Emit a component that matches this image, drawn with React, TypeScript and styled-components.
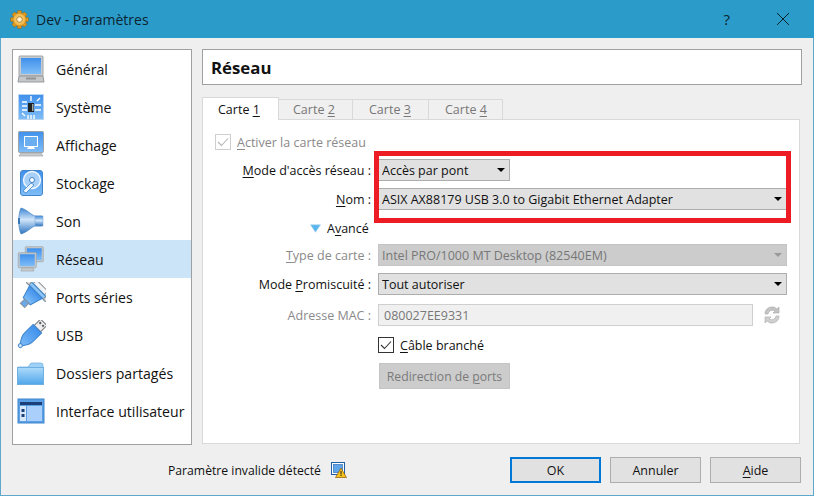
import React from 'react'
import styled, { createGlobalStyle } from 'styled-components'

const Global = createGlobalStyle`
  html, body {
    margin: 0;
    padding: 0;
    background: #fff;
  }
  body {
    font-family: "Open Sans", "Noto Sans", sans-serif;
    font-size: 13px;
    color: #111;
  }
  u { text-underline-offset: 2px; }
`

const Window = styled.div`
  position: relative;
  box-sizing: border-box;
  width: 814px;
  height: 496px;
  display: flex;
  flex-direction: column;
  background: #efefef;
  border: 1px solid #5fa9cf;
  border-top: 0;
`

const TitleBar = styled.div`
  flex: none;
  height: 38px;
  margin: 0 -1px;
  padding: 0 24px 0 10px;
  display: flex;
  align-items: center;
  background: #2b9bca;
  font-size: 14px;
  color: #0c2430;
`

const TitleText = styled.span`
  margin-left: 7px;
  flex: 1;
`

const TitleHelp = styled.span`
  margin-right: 46px;
  font-size: 15px;
`

const Body = styled.div`
  flex: 1;
  display: flex;
  gap: 10px;
  padding: 11px 11px 0 11px;
`

const Sidebar = styled.div`
  box-sizing: border-box;
  width: 180px;
  height: 396px;
  background: #fff;
  border: 1px solid #a0a0a0;
`

const SideItem = styled.div<{ $active?: boolean }>`
  height: 38px;
  display: flex;
  align-items: center;
  gap: 10px;
  padding-left: 3px;
  font-size: 14.1px;
  white-space: nowrap;
  background: ${(p) => (p.$active ? '#cce4f7' : 'transparent')};
`

const IconBox = styled.svg`
  flex: none;
  width: 30px;
  height: 30px;
`

const Defs = styled.svg`
  position: absolute;
  width: 0;
  height: 0;
`

const Main = styled.div`
  flex: 1;
  display: flex;
  flex-direction: column;
`

const Header = styled.div`
  box-sizing: border-box;
  height: 36px;
  padding: 1px 0 0 8px;
  display: flex;
  align-items: center;
  background: #fff;
  border: 1px solid #a0a0a0;
  font-size: 16.8px;
  font-weight: 700;
`

const Tabs = styled.div`
  display: flex;
  margin-top: 12px;
  height: 23px;
  position: relative;
  z-index: 1;
`

const Tab = styled.div<{ $active?: boolean; $width: number; $pad: number }>`
  box-sizing: border-box;
  width: ${(p) => p.$width}px;
  height: ${(p) => (p.$active ? '23px' : '21px')};
  margin-top: ${(p) => (p.$active ? '0' : '2px')};
  padding-left: ${(p) => p.$pad}px;
  display: flex;
  align-items: center;
  border: 1px solid #d9d9d9;
  border-left-width: ${(p) => (p.$active ? '1px' : '0')};
  border-bottom-width: ${(p) => (p.$active ? '0' : '1px')};
  background: ${(p) => (p.$active ? '#fff' : '#f0f0f0')};
  color: ${(p) => (p.$active ? '#111' : '#777')};
  font-size: 12.5px;
`

const Panel = styled.div`
  box-sizing: border-box;
  width: 598px;
  height: 325px;
  margin-top: -1px;
  padding: 13px 12px 0;
  display: flex;
  flex-direction: column;
  background: #fff;
  border: 1px solid #d9d9d9;
`

const Row = styled.div<{ $top?: number }>`
  display: grid;
  grid-template-columns: 156px 1fr;
  column-gap: 7px;
  align-items: center;
  margin-top: ${(p) => p.$top ?? 0}px;
`

const Label = styled.label<{ $muted?: boolean }>`
  text-align: right;
  white-space: nowrap;
  font-size: 12.5px;
  color: ${(p) => (p.$muted ? '#8a8a8a' : '#111')};
`

const CheckRow = styled.label<{ $muted?: boolean }>`
  height: 18px;
  display: flex;
  align-items: center;
  gap: 6px;
  font-size: 12.5px;
  color: ${(p) => (p.$muted ? '#8a8a8a' : '#111')};
`

const Check = styled.span<{ $muted?: boolean }>`
  box-sizing: border-box;
  width: 16px;
  height: 16px;
  display: flex;
  align-items: center;
  justify-content: center;
  background: #fff;
  border: 1px solid ${(p) => (p.$muted ? '#cfcfcf' : '#333')};
  color: ${(p) => (p.$muted ? '#b5b5b5' : '#333')};
`

const Combo = styled.div<{ $width?: number; $disabled?: boolean }>`
  box-sizing: border-box;
  width: ${(p) => (p.$width ? `${p.$width}px` : '100%')};
  height: 22px;
  padding: 0 4px 0 3px;
  display: flex;
  align-items: center;
  justify-content: space-between;
  font-size: 12.5px;
  white-space: nowrap;
  background: ${(p) => (p.$disabled ? '#cccccc' : '#e1e1e1')};
  border: 1px solid ${(p) => (p.$disabled ? '#c4c4c4' : '#adadad')};
  color: ${(p) => (p.$disabled ? '#777' : '#111')};
`

const Caret = styled.span<{ $disabled?: boolean }>`
  width: 0;
  height: 0;
  border-left: 4px solid transparent;
  border-right: 4px solid transparent;
  border-top: 4px solid ${(p) => (p.$disabled ? '#999' : '#000')};
`

const Advanced = styled.div`
  height: 18px;
  margin-left: 95px;
  display: flex;
  align-items: center;
  gap: 6px;
  font-size: 12.5px;
`

const MacRow = styled.div`
  display: flex;
  align-items: center;
  gap: 10px;
`

const MacInput = styled.div`
  box-sizing: border-box;
  width: 375px;
  height: 22px;
  padding-left: 5px;
  display: flex;
  align-items: center;
  background: #f0f0f0;
  border: 1px solid #cfcfcf;
  color: #777;
  font-size: 12.5px;
`

const PortsButton = styled.div`
  box-sizing: border-box;
  width: 131px;
  height: 26px;
  margin-left: 1px;
  display: flex;
  align-items: center;
  justify-content: center;
  background: #cccccc;
  border: 1px solid #c4c4c4;
  color: #7a7a7a;
  font-size: 12.2px;
`

const Footer = styled.div`
  flex: none;
  height: 50px;
  padding-left: 167px;
  padding-right: 12px;
  display: flex;
  align-items: center;
  font-size: 12.5px;
`

const Warning = styled.span`
  flex: 1;
  display: flex;
  align-items: center;
  gap: 10px;
  font-size: 12.2px;
`

const Button = styled.div<{ $primary?: boolean }>`
  box-sizing: border-box;
  width: 91px;
  height: 26px;
  margin-left: 9px;
  display: flex;
  align-items: center;
  justify-content: center;
  background: #e1e1e1;
  border: ${(p) => (p.$primary ? '2px solid #0078d7' : '1px solid #adadad')};
  font-size: 12.5px;
`

const Highlight = styled.div`
  position: absolute;
  left: 373px;
  top: 151px;
  width: 417px;
  height: 72px;
  box-sizing: border-box;
  border: 5px solid #ed1c24;
  pointer-events: none;
`

const GearIcon = () => (
  <svg width="19" height="19" viewBox="0 0 20 20">
    <g fill="#e09a1e" stroke="#8a5a10" strokeWidth="0.5">
      {[0, 45, 90, 135, 180, 225, 270, 315].map((a) => (
        <rect key={a} x="7.8" y="0.6" width="4.4" height="5" rx="1" transform={`rotate(${a} 10 10)`} />
      ))}
    </g>
    <circle cx="10" cy="10" r="7" fill="url(#gold)" stroke="#a86f14" strokeWidth="0.5" />
    <circle cx="10" cy="10" r="3" fill="#fff3d0" stroke="#9a6412" strokeWidth="0.8" />
  </svg>
)

const CloseIcon = () => (
  <svg width="14" height="14" viewBox="0 0 14 14">
    <path d="M1 1 L13 13 M13 1 L1 13" stroke="#0c2430" strokeWidth="1" fill="none" />
  </svg>
)

const Monitor = ({ x = 0, y = 0, s = 1 }: { x?: number; y?: number; s?: number }) => (
  <g transform={`translate(${x} ${y}) scale(${s})`}>
    <rect x="3" y="1" width="24" height="20" rx="1" fill="#c9ccce" stroke="#9ea3a6" />
    <rect x="5" y="3" width="20" height="16" fill="url(#blue)" />
  </g>
)

const GeneralIcon = () => (
  <IconBox viewBox="0 0 30 30">
    <Monitor y={1} />
    <path d="M3 22 H27 L28 28 H2 Z" fill="#c4c6c8" stroke="#96999c" />
    <rect x="10" y="23.5" width="10" height="2" fill="#8f9396" />
  </IconBox>
)

const SystemIcon = () => (
  <IconBox viewBox="0 0 30 30">
    <rect x="2.5" y="2.5" width="25" height="25" fill="url(#blue)" stroke="#b8d4ef" />
    <rect x="12" y="11" width="6" height="9" fill="#222" />
    <rect x="16" y="12" width="1.5" height="7" fill="#9aa" />
    <path
      d="M15 4 V9 M6 10 H11 M6 14 H11 M6 18 H11 M19 13 H25 M19 18 H25 M12 23 V27 M15 23 V27 M18 23 V27 M21 9 L24 6 M9 24 L6 21"
      stroke="#fff"
      strokeWidth="1.4"
      fill="none"
    />
  </IconBox>
)

const DisplayIcon = () => (
  <IconBox viewBox="0 0 30 30">
    <rect x="2.5" y="1.5" width="25" height="21" rx="1" fill="url(#blue)" stroke="#9ea3a6" />
    <rect x="8" y="6" width="14" height="11" fill="#fff" />
    <rect x="9" y="7" width="12" height="9" fill="#6aaef0" />
    <path d="M12 17 H18 L19 19 H11 Z" fill="#fff" />
    <path d="M5 23 H25 L27 26 H3 Z" fill="#c9ccce" stroke="#9ea3a6" strokeWidth="0.7" />
  </IconBox>
)

const StorageIcon = () => (
  <IconBox viewBox="0 0 30 30">
    <rect x="4.5" y="2.5" width="22" height="25" rx="2.5" fill="url(#blue)" stroke="#3f85cc" />
    <circle cx="16" cy="12" r="8.5" fill="#a9d0f7" stroke="#f2f8fe" strokeWidth="1.4" />
    <circle cx="16" cy="12" r="2.5" fill="#fff" stroke="#3f85cc" />
    <path d="M7 23 L15 15 L18 17 L10 25 Z" fill="#eef5fc" stroke="#3f85cc" strokeWidth="0.8" />
  </IconBox>
)

const SoundIcon = () => (
  <IconBox viewBox="0 0 30 30">
    <path d="M5 2 C12 4 15 9 19 10 H26 V20 H19 C15 21 12 26 5 28 C2 22 2 8 5 2 Z" fill="url(#cone)" stroke="#3f7fbf" strokeWidth="0.7" />
    <rect x="19" y="10" width="8" height="10" fill="url(#cone)" stroke="#7aa9d6" strokeWidth="0.5" />
    <rect x="2" y="12" width="2" height="6" fill="#3977b5" />
  </IconBox>
)

const NetworkIcon = () => (
  <IconBox viewBox="0 0 30 30">
    <Monitor x={7} y={2} s={0.75} />
    <Monitor x={0} y={8} s={0.75} />
    <path d="M6 24 H17 L18 27 H5 Z" fill="#c9ccce" stroke="#9ea3a6" strokeWidth="0.7" />
  </IconBox>
)

const SerialIcon = () => (
  <IconBox viewBox="0 0 30 30">
    <g transform="rotate(45 15 15)">
      <rect x="7" y="-1" width="16" height="5" fill="#f2f3f4" stroke="#8d9194" />
      <rect x="2" y="4" width="26" height="4" fill="#8cc4f5" stroke="#3f85cc" />
      <path d="M6 8 H24 L20 21 H10 Z" fill="url(#blue)" stroke="#3f85cc" />
      <rect x="12" y="21" width="6" height="6" fill="#6aa8e8" stroke="#8d9194" />
      <circle cx="3" cy="6" r="2" fill="#e3e6e8" stroke="#8d9194" />
      <circle cx="27" cy="6" r="2" fill="#e3e6e8" stroke="#8d9194" />
    </g>
  </IconBox>
)

const UsbIcon = () => (
  <IconBox viewBox="0 0 30 30">
    <g transform="rotate(45 15 15)">
      <rect x="10.5" y="-3" width="9" height="9" fill="#eceeef" stroke="#777" />
      <rect x="12" y="-1" width="2" height="2" fill="#555" />
      <rect x="16" y="-1" width="2" height="2" fill="#555" />
      <path d="M9 6 H21 V18 C21 24 18 26 15 31 C12 26 9 24 9 18 Z" fill="url(#blue)" stroke="#3f85cc" />
      <circle cx="15" cy="30" r="2" fill="#cfe3f7" stroke="#3f85cc" />
    </g>
  </IconBox>
)

const FolderIcon = () => (
  <IconBox viewBox="0 0 30 30">
    <path d="M2 9 L12 9 L15 5 H25 Q27 5 27 7 V10 H2 Z" fill="#9fd0f5" stroke="#6fb0e3" strokeWidth="0.7" />
    <rect x="1.5" y="9.5" width="26" height="17" fill="url(#folder)" stroke="#6fb0e3" />
  </IconBox>
)

const InterfaceIcon = () => (
  <IconBox viewBox="0 0 30 30">
    <rect x="2" y="3" width="26" height="24" fill="#5b9fe6" stroke="#3f85cc" />
    <rect x="4" y="6" width="22" height="3" fill="#1d3f78" />
    <rect x="4" y="10" width="6" height="15" fill="#d7e8fa" />
    <rect x="11" y="10" width="15" height="15" fill="#a9cffa" />
    <rect x="5.5" y="13" width="3" height="3" fill="#1d3f78" />
    <rect x="5.5" y="18" width="3" height="3" fill="#1d3f78" />
  </IconBox>
)

const RefreshIcon = () => (
  <svg width="18" height="20" viewBox="0 0 18 20">
    <path d="M2 9 A7 7 0 0 1 14 4 L16 2 V8 H10 L12 6 A4.5 4.5 0 0 0 5 9 Z" fill="#c4c4c4" stroke="#a8a8a8" strokeWidth="0.6" />
    <path d="M16 11 A7 7 0 0 1 4 16 L2 18 V12 H8 L6 14 A4.5 4.5 0 0 0 13 11 Z" fill="#d0d0d0" stroke="#a8a8a8" strokeWidth="0.6" />
  </svg>
)

const WarnIcon = () => (
  <svg width="16" height="16" viewBox="0 0 16 16">
    <rect x="0.5" y="0.5" width="13" height="12" fill="#fff" stroke="#1f5fa8" />
    <rect x="2.5" y="2.5" width="9" height="8" fill="#5fa5ea" stroke="#1f5fa8" strokeWidth="0.6" />
    <path d="M10 6 L15.5 15.5 H4.5 Z" fill="#f7c21a" stroke="#8a5a10" strokeWidth="0.7" />
    <rect x="9.5" y="9" width="1" height="3.5" fill="#222" />
    <rect x="9.5" y="13" width="1" height="1" fill="#222" />
  </svg>
)

const TickIcon = () => (
  <svg width="12" height="10" viewBox="0 0 12 10">
    <path d="M1 5 L4.5 8.5 L11 1.5" stroke="currentColor" strokeWidth="1.1" fill="none" />
  </svg>
)

const ExpandIcon = () => (
  <svg width="11" height="9" viewBox="0 0 12 9">
    <path d="M0.5 0.5 H11.5 L6 8.5 Z" fill="#58b4ec" stroke="#a8d4f0" strokeWidth="0.7" />
  </svg>
)

const sections = [
  { name: 'Général', icon: <GeneralIcon /> },
  { name: 'Système', icon: <SystemIcon /> },
  { name: 'Affichage', icon: <DisplayIcon /> },
  { name: 'Stockage', icon: <StorageIcon /> },
  { name: 'Son', icon: <SoundIcon /> },
  { name: 'Réseau', icon: <NetworkIcon />, active: true },
  { name: 'Ports séries', icon: <SerialIcon /> },
  { name: 'USB', icon: <UsbIcon /> },
  { name: 'Dossiers partagés', icon: <FolderIcon /> },
  { name: 'Interface utilisateur', icon: <InterfaceIcon /> },
]

const App: React.FC = () => {
  return (
    <>
      <Global />
      <Defs>
        <defs>
          <linearGradient id="blue" x1="0" y1="0" x2="0" y2="1">
            <stop offset="0" stopColor="#3f90ec" />
            <stop offset="1" stopColor="#7fbdf7" />
          </linearGradient>
          <linearGradient id="folder" x1="0" y1="0" x2="0" y2="1">
            <stop offset="0" stopColor="#aedbfa" />
            <stop offset="1" stopColor="#4fa6ea" />
          </linearGradient>
          <linearGradient id="cone" x1="0" y1="0" x2="0" y2="1">
            <stop offset="0" stopColor="#3f86d4" />
            <stop offset="0.45" stopColor="#cfe5fa" />
            <stop offset="1" stopColor="#2f74c0" />
          </linearGradient>
          <radialGradient id="gold">
            <stop offset="0" stopColor="#ffe9a8" />
            <stop offset="1" stopColor="#eda92c" />
          </radialGradient>
        </defs>
      </Defs>
      <Window>
        <TitleBar>
          <GearIcon />
          <TitleText>Dev - Paramètres</TitleText>
          <TitleHelp>?</TitleHelp>
          <CloseIcon />
        </TitleBar>
        <Body>
          <Sidebar>
            {sections.map((s) => (
              <SideItem key={s.name} $active={s.active}>
                {s.icon}
                <span>{s.name}</span>
              </SideItem>
            ))}
          </Sidebar>
          <Main>
            <Header>Réseau</Header>
            <Tabs>
              <Tab $active $width={77} $pad={15}>
                <span>Carte <u>1</u></span>
              </Tab>
              <Tab $width={74} $pad={14}>
                <span>Carte <u>2</u></span>
              </Tab>
              <Tab $width={76} $pad={16}>
                <span>Carte <u>3</u></span>
              </Tab>
              <Tab $width={74} $pad={16}>
                <span>Carte <u>4</u></span>
              </Tab>
            </Tabs>
            <Panel>
              <CheckRow $muted>
                <Check $muted>
                  <TickIcon />
                </Check>
                <span><u>A</u>ctiver la carte réseau</span>
              </CheckRow>
              <Row $top={8}>
                <Label><u>M</u>ode d'accès réseau :</Label>
                <Combo $width={132}>
                  Accès par pont
                  <Caret />
                </Combo>
              </Row>
              <Row $top={7}>
                <Label><u>N</u>om :</Label>
                <Combo>
                  ASIX AX88179 USB 3.0 to Gigabit Ethernet Adapter
                  <Caret />
                </Combo>
              </Row>
              <Row $top={9}>
                <Advanced>
                  <ExpandIcon />
                  <span>A<u>v</u>ancé</span>
                </Advanced>
                <span />
              </Row>
              <Row $top={7}>
                <Label $muted><u>T</u>ype de carte :</Label>
                <Combo $disabled>
                  Intel PRO/1000 MT Desktop (82540EM)
                  <Caret $disabled />
                </Combo>
              </Row>
              <Row $top={7}>
                <Label>Mode <u>P</u>romiscuité :</Label>
                <Combo>
                  Tout autoriser
                  <Caret />
                </Combo>
              </Row>
              <Row $top={9}>
                <Label $muted>Adresse MAC :</Label>
                <MacRow>
                  <MacInput>080027EE9331</MacInput>
                  <RefreshIcon />
                </MacRow>
              </Row>
              <Row $top={10}>
                <span />
                <CheckRow>
                  <Check>
                    <TickIcon />
                  </Check>
                  <span><u>C</u>âble branché</span>
                </CheckRow>
              </Row>
              <Row $top={9}>
                <span />
                <PortsButton>
                  <span>Redirection de <u>p</u>orts</span>
                </PortsButton>
              </Row>
            </Panel>
          </Main>
        </Body>
        <Footer>
          <Warning>
            Paramètre invalide détecté
            <WarnIcon />
          </Warning>
          <Button $primary>OK</Button>
          <Button>Annuler</Button>
          <Button><span><u>A</u>ide</span></Button>
        </Footer>
        <Highlight />
      </Window>
    </>
  )
}

export default App
